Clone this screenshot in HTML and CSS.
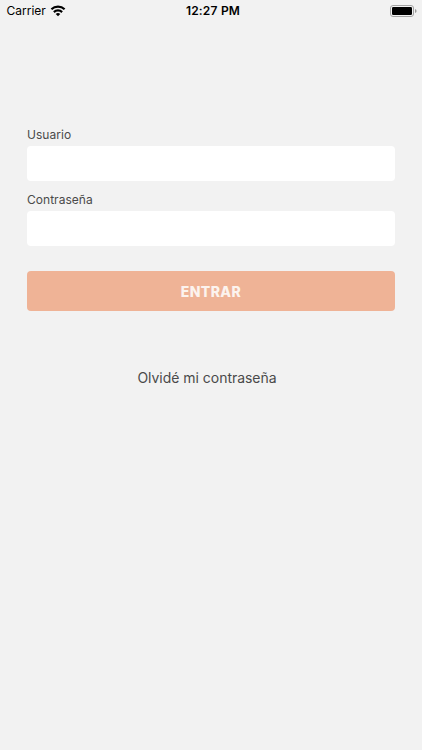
FILE: index.html
```html
<!DOCTYPE html>
<html lang="es">
<head>
<meta charset="utf-8">
<title>Entrar</title>
<link rel="stylesheet" href="styles.css">
</head>
<body>
<header class="status">
  <div class="carrier"><span class="carrier-name">Carrier</span>
    <svg class="wifi" width="16" height="12" viewBox="0 0 16 12"><g fill="none" stroke="#000" stroke-width="2.2"><path d="M1.4 4.2a9.5 9.5 0 0 1 13.2 0"/><path d="M3.9 7.1a5.9 5.9 0 0 1 8.2 0"/></g><path d="M5.7 9a3.3 3.3 0 0 1 4.6 0L8 11.3z"/></svg>
  </div>
  <div class="time">12:27 PM</div>
  <svg class="battery" width="28" height="12" viewBox="0 0 28 12"><rect x=".5" y=".5" width="23" height="11" rx="2.5" fill="none" stroke="#a3a3a3"/><rect x="2" y="2" width="20" height="8" rx="1.2"/><path d="M25 4q1.6.6 1.6 2T25 8z" fill="#999"/></svg>
</header>
<main class="login">
  <form class="form">
    <label class="label" for="user">Usuario</label>
    <input class="field" id="user" type="text">
    <label class="label" for="pass">Contraseña</label>
    <input class="field" id="pass" type="password">
    <button class="submit" type="button"><span class="submit-text">ENTRAR</span></button>
  </form>
  <a class="forgot"><span class="forgot-text">Olvidé mi contraseña</span></a>
</main>
</body>
</html>
```
FILE: styles.css
```css
* { box-sizing: border-box; }
body { margin: 0; height: 750px; overflow: hidden; background: #f2f2f2; color: #4a4a4a; font-family: Inter, sans-serif; }
.status { display: grid; grid-template-columns: 1fr auto 1fr; align-items: center; height: 21px; padding: 0 4px 0 6.5px; color: #000; }
.carrier { display: flex; align-items: center; gap: 5px; font-size: 12px; line-height: 16px; }
.carrier-name { padding-top: 1px; }
.wifi { margin-left: -.5px; }
.time { padding: 1px 0 0 1.5px; font-size: 12px; line-height: 16px; font-weight: 600; letter-spacing: .2px; }
.battery { justify-self: end; }
.login { padding: 106px 27px 0; }
.form { display: flex; flex-direction: column; }
.label { height: 19px; line-height: 16px; font-size: 12px; letter-spacing: .03px; }
.field { height: 34.5px; margin: 0 0 11.5px; padding: 0 10px; border: 0; border-radius: 4px; background: #fff; }
.submit { height: 40px; margin-top: 14px; padding: 2px 0 0; border: 0; border-radius: 4px; background: #efb396; color: #fcf3ee; font: 800 14px/18px Inter, sans-serif; letter-spacing: .4px; }
.forgot { display: block; margin-top: 57px; padding-right: 8px; text-align: center; font-size: 14px; line-height: 20px; letter-spacing: -.03px; }
```
